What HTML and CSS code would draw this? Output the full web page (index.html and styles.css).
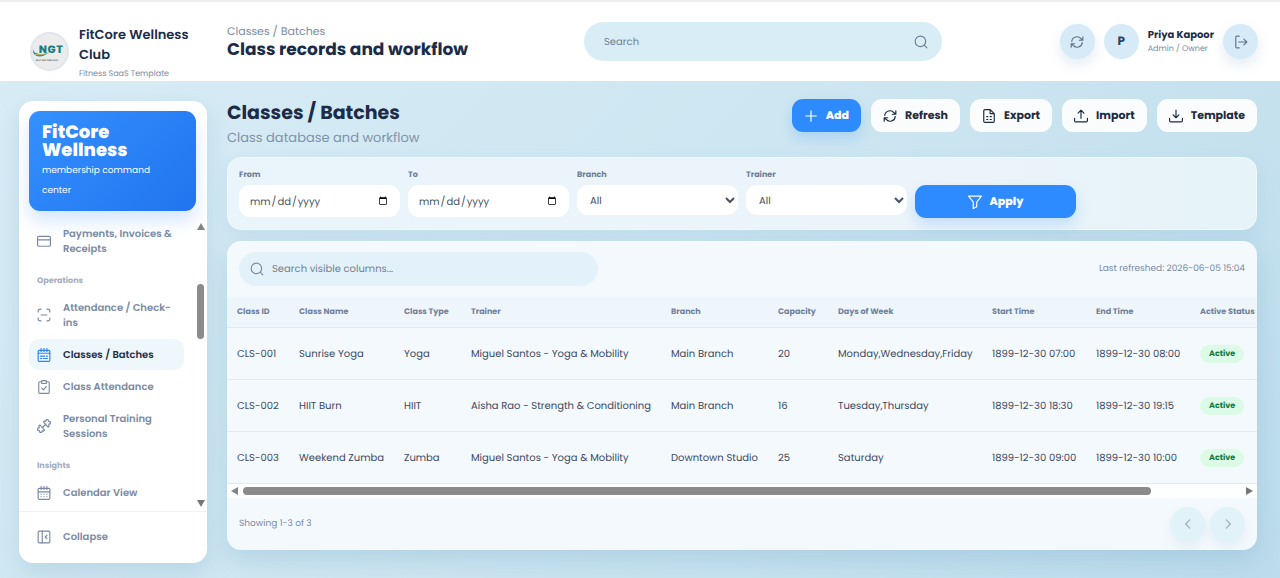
FILE: index.html
```html
<!DOCTYPE html>
<html lang="en">
<head>
<meta charset="utf-8">
<meta name="viewport" content="width=device-width, initial-scale=1">
<title>Classes / Batches - FitCore Wellness Club</title>
<link rel="stylesheet" href="styles.css">
</head>
<body>
<svg class="sprite" aria-hidden="true">
  <symbol id="refresh" viewBox="0 0 24 24"><path d="M3 11a9 9 0 0 1 16-4.500L22 9M22 3v6h-6M21 13a9 9 0 0 1-16 4.500L2 15M8 15H2v6"/></symbol>
  <symbol id="search" viewBox="0 0 24 24"><circle cx="11" cy="11" r="9"/><path d="m22 22-4.500-4.500"/></symbol>
  <symbol id="logout" viewBox="0 0 24 24"><path d="M9 2H5a2 2 0 0 0-2 2v16a2 2 0 0 0 2 2h4M8 12h14M17 7l5 5-5 5"/></symbol>
  <symbol id="plus" viewBox="0 0 24 24"><path d="M12 3v18M3 12h18"/></symbol>
  <symbol id="sheet" viewBox="0 0 24 24"><path d="M14 1H5a2 2 0 0 0-2 2v18a2 2 0 0 0 2 2h14a2 2 0 0 0 2-2V8zM14 1v7h7M8 13h2M14 13h2M8 18h2M14 18h2"/></symbol>
  <symbol id="upload" viewBox="0 0 24 24"><path d="M1 16v4a2 2 0 0 0 2 2h18a2 2 0 0 0 2-2v-4M7 7l5-5 5 5M12 2v14"/></symbol>
  <symbol id="download" viewBox="0 0 24 24"><path d="M1 16v4a2 2 0 0 0 2 2h18a2 2 0 0 0 2-2v-4M7 10l5 5 5-5M12 2v13"/></symbol>
  <symbol id="funnel" viewBox="0 0 24 24"><path d="M1 2h22l-8 10v8l-6 3V12z"/></symbol>
  <symbol id="card" viewBox="0 0 24 24"><rect x="1" y="4" width="22" height="17" rx="2"/><path d="M1 10h22"/></symbol>
  <symbol id="scan" viewBox="0 0 24 24"><path d="M2 7V5a3 3 0 0 1 3-3h2M17 2h2a3 3 0 0 1 3 3v2M22 17v2a3 3 0 0 1-3 3h-2M7 22H5a3 3 0 0 1-3-3v-2M7 12h10"/></symbol>
  <symbol id="calendar-list" viewBox="0 0 24 24"><rect x="2" y="4" width="20" height="19" rx="2"/><path d="M7 1v5M12 1v5M17 1v5M2 9h20M6 14h7M16 14h2M6 18h2M11 18h7"/></symbol>
  <symbol id="calendar" viewBox="0 0 24 24"><rect x="2" y="4" width="20" height="19" rx="2"/><path d="M7 1v5M12 1v5M17 1v5M2 10h20M7 14h.1M12 14h.1M17 14h.1M7 18h.1M12 18h.1M17 18h.1"/></symbol>
  <symbol id="clipboard" viewBox="0 0 24 24"><rect x="8" y="1" width="8" height="5" rx="1"/><path d="M16 3h3a2 2 0 0 1 2 2v16a2 2 0 0 1-2 2H5a2 2 0 0 1-2-2V5a2 2 0 0 1 2-2h3M8 14l3 3 5-6"/></symbol>
  <symbol id="dumbbell" viewBox="0 0 24 24"><path d="m9 15 6-6M11 5l2-2 2 1 1-3 3 0 1 3 3 1v3l-3 1 1 3-2 2zM13 19l-2 2-2-1-1 3H5l-1-3-3-1v-3l3-1-1-3 2-2z"/></symbol>
  <symbol id="panel" viewBox="0 0 24 24"><rect x="2" y="2" width="20" height="20" rx="2"/><path d="M9 2v20M17 9l-3 3 3 3"/></symbol>
  <symbol id="left" viewBox="0 0 24 24"><path d="m15 5-7 7 7 7"/></symbol>
  <symbol id="right" viewBox="0 0 24 24"><path d="m9 5 7 7-7 7"/></symbol>
</svg>

<header class="topbar">
  <div class="brand">
    <svg class="brand-logo" viewBox="0 0 40 40" role="img" aria-label="NGT">
      <circle cx="20" cy="20" r="19" fill="#ececec" stroke="#dde7ed" stroke-width="2"/>
      <text x="9 18 27" y="22" class="logo-name">NGT</text>
      <path d="M3 17c0 6 9 7 16 4-6 6-17 6-16-4z" fill="#1f8a99"/>
      <path d="M5 23c6 1 10 0 15-2" fill="none" stroke="#d8b55c" stroke-width="1"/>
      <text x="6" y="30" class="logo-tag">NEXT GEN TEMPLATES</text>
    </svg>
    <div class="brand-text"><strong>FitCore Wellness Club</strong><small>Fitness SaaS Template</small></div>
  </div>
  <div class="crumb"><span>Classes / Batches</span><strong>Class records and workflow</strong></div>
  <label class="top-search"><input type="search" placeholder="Search" aria-label="Search"><svg class="icon"><use href="#search"/></svg></label>
  <div class="account">
    <button class="round" aria-label="Refresh"><svg class="icon"><use href="#refresh"/></svg></button>
    <span class="avatar">P</span>
    <div class="user"><strong>Priya Kapoor</strong><small>Admin / Owner</small></div>
    <button class="round" aria-label="Log out"><svg class="icon"><use href="#logout"/></svg></button>
  </div>
</header>

<div class="shell">
  <aside class="sidebar">
    <div class="hero"><strong>FitCore Wellness</strong><span>membership command center</span></div>
    <div class="nav-wrap">
      <nav class="nav">
        <a href="#"><svg class="icon"><use href="#card"/></svg><span>Payments, Invoices &amp; Receipts</span></a>
        <h2>Operations</h2>
        <a href="#"><svg class="icon"><use href="#scan"/></svg><span>Attendance / Check-ins</span></a>
        <a href="#" class="current" aria-current="page"><svg class="icon"><use href="#calendar-list"/></svg><span>Classes / Batches</span></a>
        <a href="#"><svg class="icon"><use href="#clipboard"/></svg><span>Class Attendance</span></a>
        <a href="#"><svg class="icon"><use href="#dumbbell"/></svg><span>Personal Training Sessions</span></a>
        <h2>Insights</h2>
        <a href="#"><svg class="icon"><use href="#calendar"/></svg><span>Calendar View</span></a>
      </nav>
      <div class="vbar" aria-hidden="true"><i class="arrow up"></i><i class="vthumb"></i><i class="arrow down"></i></div>
    </div>
    <div class="side-foot"><button><svg class="icon"><use href="#panel"/></svg>Collapse</button></div>
  </aside>

  <main class="main">
    <div class="page-head">
      <div><h1>Classes / Batches</h1><p>Class database and workflow</p></div>
      <div class="actions">
        <button class="btn primary"><svg class="icon"><use href="#plus"/></svg>Add</button>
        <button class="btn"><svg class="icon"><use href="#refresh"/></svg>Refresh</button>
        <button class="btn"><svg class="icon"><use href="#sheet"/></svg>Export</button>
        <button class="btn"><svg class="icon"><use href="#upload"/></svg>Import</button>
        <button class="btn"><svg class="icon"><use href="#download"/></svg>Template</button>
      </div>
    </div>

    <form class="filters">
      <label>From<input type="date"></label>
      <label>To<input type="date"></label>
      <label>Branch<select><option>All</option></select></label>
      <label>Trainer<select><option>All</option></select></label>
      <button type="button" class="btn primary apply"><svg class="icon"><use href="#funnel"/></svg>Apply</button>
    </form>

    <section class="records">
      <div class="tools">
        <label class="col-search"><svg class="icon"><use href="#search"/></svg><input type="search" placeholder="Search visible columns..." aria-label="Search visible columns"></label>
        <span>Last refreshed: 2026-06-05 15:04</span>
      </div>
      <div class="table-scroll">
        <table>
          <colgroup><col class="c-id"><col class="c-name"><col class="c-type"><col class="c-trainer"><col class="c-branch"><col class="c-cap"><col class="c-days"><col class="c-time"><col class="c-time"><col></colgroup>
          <thead><tr><th>Class ID</th><th>Class Name</th><th>Class Type</th><th>Trainer</th><th>Branch</th><th>Capacity</th><th>Days of Week</th><th>Start Time</th><th>End Time</th><th>Active Status</th></tr></thead>
          <tbody>
            <tr><td>CLS-001</td><td>Sunrise Yoga</td><td>Yoga</td><td>Miguel Santos - Yoga &amp; Mobility</td><td>Main Branch</td><td>20</td><td>Monday,Wednesday,Friday</td><td>1899-12-30 07:00</td><td>1899-12-30 08:00</td><td><span class="pill">Active</span></td></tr>
            <tr><td>CLS-002</td><td>HIIT Burn</td><td>HIIT</td><td>Aisha Rao - Strength &amp; Conditioning</td><td>Main Branch</td><td>16</td><td>Tuesday,Thursday</td><td>1899-12-30 18:30</td><td>1899-12-30 19:15</td><td><span class="pill">Active</span></td></tr>
            <tr><td>CLS-003</td><td>Weekend Zumba</td><td>Zumba</td><td>Miguel Santos - Yoga &amp; Mobility</td><td>Downtown Studio</td><td>25</td><td>Saturday</td><td>1899-12-30 09:00</td><td>1899-12-30 10:00</td><td><span class="pill">Active</span></td></tr>
          </tbody>
        </table>
      </div>
      <div class="hbar" aria-hidden="true"><i class="arrow prev"></i><div class="htrack"><i class="hthumb"></i></div><i class="arrow next"></i></div>
      <div class="pager">
        <span>Showing 1-3 of 3</span>
        <div><button disabled aria-label="Previous page"><svg class="icon"><use href="#left"/></svg></button><button disabled aria-label="Next page"><svg class="icon"><use href="#right"/></svg></button></div>
      </div>
    </section>
  </main>
</div>
</body>
</html>
```

FILE: styles.css
```css
* { box-sizing: border-box; }
body {
  margin: 0;
  min-height: 100vh;
  font-family: Poppins, Inter, "Open Sans", sans-serif;
  font-size: 10px;
  text-rendering: geometricPrecision;
  color: #1c2b48;
  background: linear-gradient(135deg, #d9ecf6 0%, #cde6f1 50%, #bddcec 100%);
}
button, input, select { font: inherit; color: inherit; border: 0; margin: 0; text-rendering: inherit; }
button { cursor: pointer; }
h1, h2, p { margin: 0; }
a { color: inherit; text-decoration: none; }
.sprite { position: absolute; width: 0; height: 0; }
.icon {
  width: 14px; height: 14px; flex: none;
  fill: none; stroke: currentColor; stroke-width: 2;
  stroke-linecap: round; stroke-linejoin: round;
}

/* Top bar */
.topbar {
  display: grid;
  grid-template-columns: 177px 337px minmax(200px, 358px) 1fr;
  align-items: start;
  gap: 20px;
  height: 81px;
  padding: 20px 22px 0 30px;
  background: #fff;
  border-top: 2px solid #efefef;
  overflow: hidden;
}
.brand { display: flex; gap: 10px; }
.brand-logo { width: 39px; height: 39px; flex: none; margin-top: 10px; }
.logo-name { font: 800 11px Poppins, Inter, sans-serif; fill: #157f86; }
.logo-tag { font: 700 2px Inter, sans-serif; fill: #555; }
.brand-text { display: flex; flex-direction: column; margin-top: 3px; }
.brand-text strong { font-size: 13px; line-height: 20px; font-weight: 600; }
.brand-text small { font-size: 8px; line-height: 18px; color: #7b8ba3; }
.crumb { display: flex; flex-direction: column; white-space: nowrap; }
.crumb span { font-size: 11px; line-height: 18px; color: #7b8ba3; }
.crumb strong { font-size: 17px; line-height: 19px; font-weight: 700; }
.top-search {
  display: flex; align-items: center; gap: 8px;
  height: 39px; padding: 0 14px 0 20px;
  border-radius: 20px; background: #d9edf7; color: #6c7f96;
}
.top-search input, .col-search input { flex: 1; min-width: 0; padding: 0; background: none; outline: 0; }
::placeholder { color: #74808e; opacity: 1; }
.account { display: flex; align-items: center; justify-content: flex-end; gap: 9px; margin-top: 2px; white-space: nowrap; }
.round, .avatar {
  display: grid; place-items: center; width: 35px; height: 35px; padding: 0;
  border-radius: 50%; background: #d6eaf8; color: #63758c; flex: none;
}
.round { box-shadow: 0 6px 14px rgba(100, 150, 190, .18); }
.avatar { font-size: 12px; font-weight: 700; color: #30415f; }
.user { display: flex; flex-direction: column; }
.user strong { font-size: 10px; line-height: 14px; font-weight: 700; }
.user small { font-size: 8px; line-height: 13px; color: #7b8ba3; }

/* Page frame */
.shell { display: grid; grid-template-columns: 188px minmax(0, 1fr); gap: 20px; align-items: start; padding: 18px 23px 14px 19px; }

/* Sidebar */
.sidebar { margin-top: 2px; overflow: hidden; border-radius: 14px; background: #fff; box-shadow: 0 10px 24px rgba(90, 150, 185, .2); }
.hero {
  position: relative;
  display: flex; flex-direction: column; gap: 1px; margin: 10px 11px 0 10px;
  padding: 13px 30px 10px 13px; border-radius: 11px; color: #fff;
  background: linear-gradient(135deg, #3490ff, #2174ee);
  box-shadow: 0 10px 18px rgba(45, 130, 250, .2);
}
.hero strong { font-size: 18px; line-height: 18px; font-weight: 800; }
.hero span { font-size: 9px; line-height: 20px; }
.nav-wrap { display: flex; gap: 12px; height: 300px; padding: 7px 2px 0 10px; }
.nav { flex: 1; display: flex; flex-direction: column; gap: 1px; overflow: hidden; color: #7a8aa3; font-weight: 600; }
.nav a { display: flex; align-items: center; gap: 12px; padding: 8px 4px 8px 8px; border-radius: 10px; line-height: 15px; }
.nav h2 { padding: 10px 8px 4px; font-size: 8px; line-height: 12px; font-weight: 700; color: #a3afc0; }
.nav .current { color: #1c2b48; background: #eef7fc; }
.nav .current .icon { color: #2b86f5; }
.vbar { display: flex; flex-direction: column; align-items: center; width: 9px; padding: 5px 0 4px; }
.vthumb { width: 7px; height: 55px; margin: 54px 0 auto; border-radius: 4px; background: #8b8b8b; }
.arrow { width: 0; height: 0; border: 4px solid transparent; }
.up { border-top: 0; border-bottom: 7px solid #858585; }
.down { border-bottom: 0; border-top: 7px solid #777; }
.prev { border-left: 0; border-right: 7px solid #858585; }
.next { border-right: 0; border-left: 7px solid #777; }
.side-foot { border-top: 1px solid #edf2f7; padding: 9px 10px 11px; }
.side-foot button { display: flex; align-items: center; gap: 12px; width: 100%; padding: 8px; line-height: 15px; font-weight: 600; color: #7a8aa3; background: none; }

/* Page heading */
.main { display: flex; flex-direction: column; gap: 11px; min-width: 0; }
.page-head { display: flex; justify-content: space-between; align-items: flex-start; height: 47px; }
h1 { font-size: 19px; line-height: 28px; font-weight: 700; }
.page-head p { font-size: 13px; line-height: 21px; color: #8192a8; }
.actions { display: flex; gap: 10px; }
.btn {
  display: flex; align-items: center; justify-content: center; gap: 8px;
  height: 33px; padding: 0 12px; border-radius: 11px;
  background: #fafcfe; color: #1c2b40; font-size: 11px; font-weight: 700;
}
.primary { background: #2e8bff; color: #fff; font-weight: 800; box-shadow: 0 7px 14px rgba(46, 139, 255, .2); }

/* Filters */
.filters {
  display: grid; grid-template-columns: repeat(6, 1fr); gap: 8px;
  padding: 10px 11px 11px; border: 1px solid #f1f9fc; border-radius: 14px;
  background: linear-gradient(90deg, #e9f5fb, #ecf4fa 60%, #e6f3f8);
  box-shadow: 0 8px 18px rgba(100, 160, 190, .12);
}
.filters label { display: flex; flex-direction: column; gap: 4px; padding-bottom: 1px; font-size: 8px; line-height: 13px; font-weight: 700; color: #6d7f98; }
.filters input, .filters select {
  width: 100%; height: 32px; padding: 0 10px; border-radius: 11px;
  background: #fff; font-size: 10px; font-weight: 400; color: #465366;
}
.filters select { height: 30px; padding: 0 0 0 9px; }
.apply { align-self: end; }

/* Records */
.records { overflow: hidden; border-radius: 14px; background: #f4f9fd; box-shadow: 0 10px 24px rgba(80, 145, 180, .22); }
.tools { display: flex; justify-content: space-between; align-items: center; padding: 11px 12px; color: #7b8ba3; font-size: 9px; }
.col-search { display: flex; align-items: center; gap: 8px; flex: 0 1 359px; height: 34px; padding: 0 11px; border-radius: 17px; background: #e3f2fa; font-size: 10px; }
.table-scroll { overflow: hidden; }
table { width: 100%; min-width: 1140px; table-layout: fixed; border-collapse: separate; border-spacing: 0; }
.c-id { width: 62px; } .c-name { width: 105px; } .c-type { width: 67px; } .c-trainer { width: 200px; }
.c-branch { width: 107px; } .c-cap { width: 60px; } .c-days { width: 154px; } .c-time { width: 104px; }
th, td { padding: 0 0 0 10px; text-align: left; white-space: nowrap; border-bottom: 1px solid #e0eaf1; }
th { height: 31px; font-size: 8px; font-weight: 700; color: #71829c; background: #eef6fc; }
td { height: 52px; padding-top: 1px; color: #3c4a63; font-size: 10px; }
.pill { display: inline-block; padding: 0 9px; border-radius: 9px; line-height: 18px; font-size: 8px; font-weight: 700; color: #137a42; background: #dcfbe6; }
.hbar { display: flex; align-items: center; gap: 5px; height: 14px; padding: 0 4px; background: #fdfefe; }
.htrack { flex: 1; }
.hthumb { display: block; width: 91%; height: 8px; border-radius: 4px; background: #8b8b8b; }
.pager { display: flex; align-items: center; justify-content: space-between; height: 52px; padding: 0 12px; font-size: 9px; color: #7b8ba3; }
.pager div { display: flex; gap: 5px; }
.pager button { display: grid; place-items: center; width: 35px; height: 35px; padding: 0; border-radius: 50%; color: #9eadb9; background: #e1f2f9; box-shadow: 0 6px 12px rgba(100, 150, 190, .1); }
```
